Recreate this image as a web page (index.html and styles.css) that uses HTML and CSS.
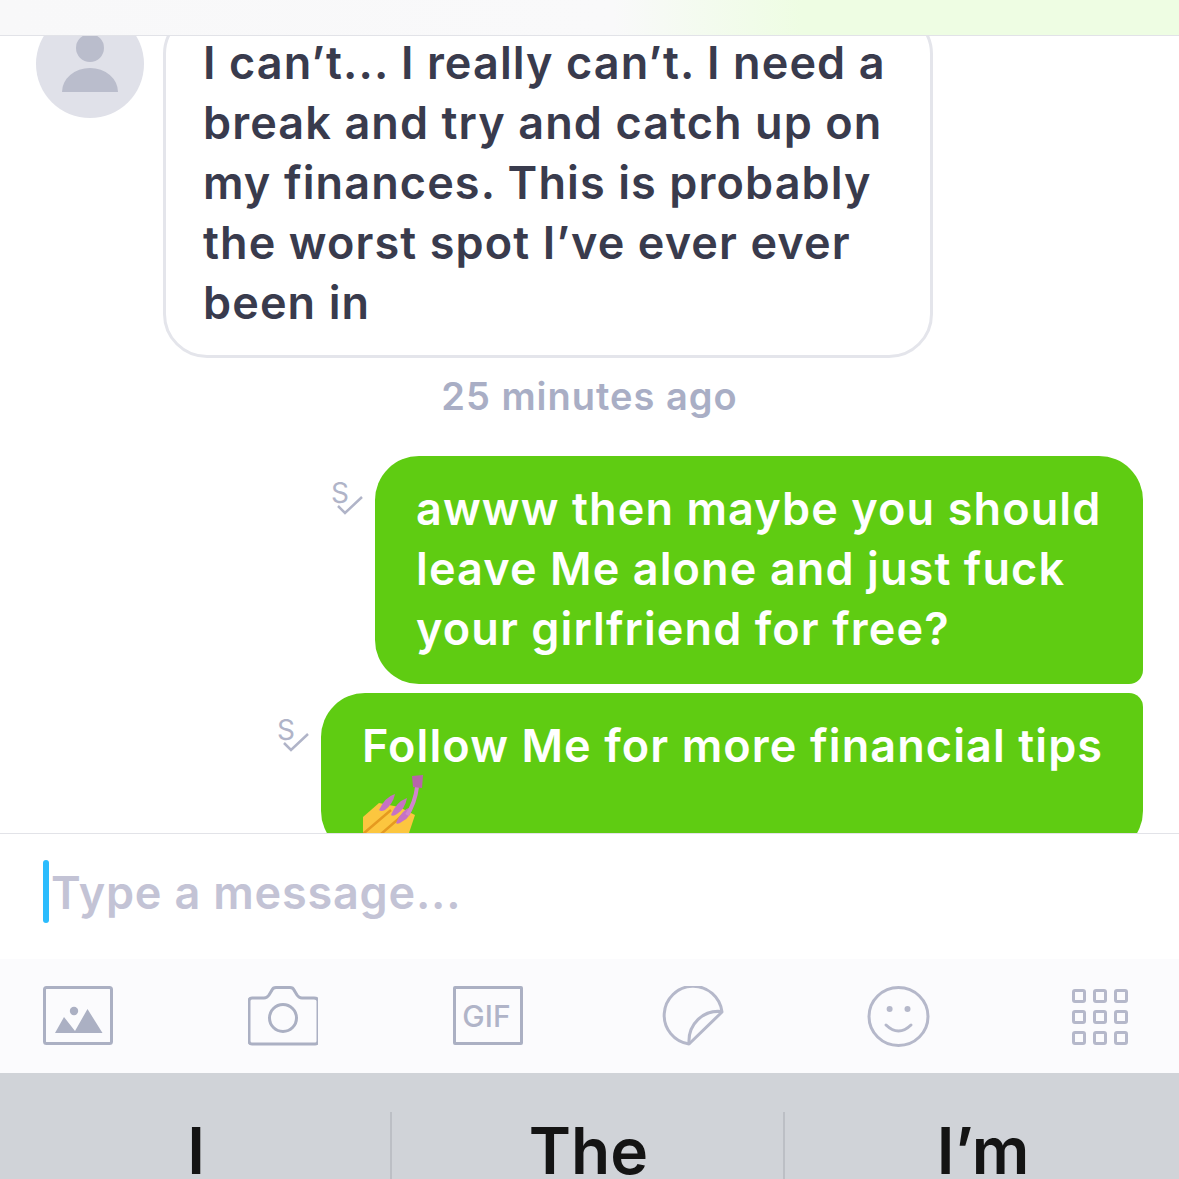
FILE: index.html
```html
<!DOCTYPE html>
<html lang="en">
<head>
<meta charset="utf-8">
<title>Chat</title>
<link rel="stylesheet" href="styles.css">
</head>
<body>
<div class="app">
  <header class="topbar"></header>
  <main class="messages">
    <div class="incoming">
      <div class="avatar">
        <svg viewBox="0 0 108 108" width="108" height="108"><circle cx="54" cy="38" r="14" fill="#babdcc"/><path d="M26 82a28 24 0 0 1 56 0z" fill="#babdcc"/></svg>
      </div>
      <div class="bubble in">I can’t... I really can’t. I need a break and try and catch up on my finances. This is probably the worst spot I’ve ever ever been in</div>
    </div>
    <div class="stamp">25 minutes ago</div>
    <div class="outgoing first">
      <div class="seen"><span class="seen-s">S</span><svg class="seen-check" viewBox="0 0 30 20" width="30" height="20"><path d="M2 10l7 7L26 1" fill="none" stroke="#b0b4c8" stroke-width="2.5"/></svg></div>
      <div class="bubble out one">awww then maybe you should leave Me alone and just fuck your girlfriend for free?</div>
    </div>
    <div class="outgoing second">
      <div class="seen"><span class="seen-s">S</span><svg class="seen-check" viewBox="0 0 30 20" width="30" height="20"><path d="M2 10l7 7L26 1" fill="none" stroke="#b0b4c8" stroke-width="2.5"/></svg></div>
      <div class="bubble out two">Follow Me for more financial tips
        <svg class="nails" viewBox="364 765 76 72" width="76" height="72">
          <path d="M364 818L380 804L400 808L416 816L410 834H364z" fill="#fcc63f"/>
          <path d="M364 835L392 811M382 835L405 815" stroke="#e59a20" stroke-width="2.500" fill="none"/>
          <path d="M380 811Q386 798 396 795Q394 805 386 811Q382 813 380 811z" fill="#c672c4"/>
          <path d="M392 816Q397 803 408 799Q406 810 398 815Q394 818 392 816z" fill="#c672c4"/>
          <path d="M397 824Q402 811 414 807Q412 818 404 822Q399 826 397 824z" fill="#c672c4"/>
          <path d="M408 816Q416 804 418 788" stroke="#d184cd" stroke-width="4" fill="none"/>
          <path d="M413 777L424 776L423 789L414 788z" fill="#b765a9"/>
        </svg>
      </div>
    </div>
  </main>
  <section class="composer">
    <span class="caret"></span><span class="placeholder">Type a message...</span>
  </section>
  <nav class="tools">
    <svg class="tool" viewBox="0 0 70 60" width="70" height="60"><rect x="1.5" y="1.5" width="67" height="56" rx="2" fill="none" stroke="#abb0c3" stroke-width="3"/><circle cx="31" cy="25" r="4.2" fill="#abb0c3"/><path d="M12 47L21 31L32 45L44.500 23L59.500 47z" fill="#abb0c3"/></svg>
    <svg class="tool" viewBox="0 0 70 60" width="70" height="60"><path d="M4 12h12q3 0 5-3l3-5q1-2.500 4-2.500h14q3 0 4 2.500l3 5q2 3 5 3h12q4 0 4 3v40q0 3-3 3H4q-3 0-3-3V15q0-3 3-3z" fill="none" stroke="#abb0c3" stroke-width="3"/><circle cx="35" cy="32" r="13.500" fill="none" stroke="#abb0c3" stroke-width="3"/></svg>
    <div class="gif">GIF</div>
    <svg class="tool" viewBox="0 0 70 60" width="70" height="60"><path d="M31 58A29 29 0 1 1 64 26z" fill="none" stroke="#b5b8ca" stroke-width="3" stroke-linejoin="round"/><path d="M63 25.500C45 24 30 38 31 57" fill="none" stroke="#b5b8ca" stroke-width="3"/></svg>
    <svg class="tool" viewBox="0 0 70 62" width="70" height="62"><ellipse cx="35.500" cy="30.500" rx="29.500" ry="29" fill="none" stroke="#b5b8ca" stroke-width="3"/><circle cx="26.600" cy="23" r="3" fill="#b5b8ca"/><circle cx="44.500" cy="23" r="3" fill="#b5b8ca"/><path d="M23 39Q35.500 51 48 39" fill="none" stroke="#b5b8ca" stroke-width="3" stroke-linecap="round"/></svg>
    <div class="grid"><i></i><i></i><i></i><i></i><i></i><i></i><i></i><i></i><i></i></div>
  </nav>
  <footer class="keyboard">
    <div class="suggestion">I</div>
    <div class="suggestion">The</div>
    <div class="suggestion">I’m</div>
  </footer>
</div>
</body>
</html>
```
FILE: styles.css
```css
* { box-sizing: border-box; }
html, body { margin: 0; padding: 0; }
body { font-family: Inter, "Liberation Sans", sans-serif; background: #fff; overflow: hidden; }
.app { width: 1179px; height: 1179px; display: flex; flex-direction: column; overflow: hidden; }
.topbar { height: 36px; flex: none; background: linear-gradient(90deg, #f8f8f9 0, #f9f9fa 52%, #eefde3 68%, #eefde3 100%); border-bottom: 1px solid #e2e3e8; position: relative; z-index: 2; }
.messages { height: 797px; flex: none; overflow: hidden; }
.incoming { display: flex; align-items: flex-start; gap: 19px; padding-left: 36px; margin-top: -26px; }
.avatar { width: 108px; height: 108px; border-radius: 50%; background: #e0e1e9; flex: none; }
.avatar svg { display: block; }
.bubble { font-size: 45px; line-height: 60px; font-weight: 600; letter-spacing: 1.1px; }
.bubble.in { width: 770px; height: 348px; border: 3px solid #e4e5eb; border-radius: 44px; padding: 20px 30px 0 37px; color: #393b4d; }
.stamp { text-align: center; color: #a9aec5; font-size: 38px; line-height: 46px; font-weight: 600; letter-spacing: 1px; margin-top: 15px; }
.outgoing { display: flex; justify-content: flex-end; padding-right: 36px; align-items: flex-start; }
.outgoing.first { margin-top: 37px; }
.outgoing.second { margin-top: 9px; }
.seen { flex: none; width: 34px; height: 40px; margin: 21px 8px 0 0; position: relative; }
.seen-s { font-size: 28px; line-height: 32px; font-weight: 400; color: #b0b4c8; display: block; margin-left: -2px; }
.seen-check { position: absolute; left: 3px; top: 19px; }
.bubble.out { background: #5fcc12; color: #fff; padding: 23px 20px 0 41px; }
.bubble.one { width: 768px; height: 228px; border-radius: 44px 44px 14px 44px; }
.bubble.two { width: 822px; height: 162px; border-radius: 44px 14px 44px 44px; }
.nails { display: block; margin: -12px 0 0 1px; }
.composer { height: 126px; flex: none; border-top: 1px solid #e2e3e8; display: flex; align-items: flex-start; padding: 26px 0 0 43px; }
.caret { width: 6px; height: 63px; border-radius: 3px; background: #2bbcfd; flex: none; }
.placeholder { font-size: 45px; line-height: 66px; font-weight: 600; letter-spacing: 0.8px; color: #c3c3d5; margin-left: 2px; }
.tools { height: 114px; flex: none; background: #fbfbfd; display: flex; gap: 135px; align-items: flex-start; padding: 27px 0 0 43px; }
.tool { display: block; flex: none; }
.gif { width: 70px; height: 59px; flex: none; border: 3px solid #abb0c3; border-radius: 2px; color: #b0b4c8; font-size: 30px; font-weight: 500; padding-right: 3px; display: flex; align-items: center; justify-content: center; }
.grid { display: grid; flex: none; grid-template-columns: repeat(3, 14px); grid-auto-rows: 14px; gap: 7px; margin: 3px 0 0 4px; }
.grid i { border: 3px solid #b5b8ca; border-radius: 3px; }
.keyboard { height: 106px; flex: none; background: #d0d3d8; display: grid; grid-template-columns: 392px 393px 394px; padding-top: 39px; overflow: hidden; }
.suggestion { text-align: center; font-size: 64px; line-height: 78px; font-weight: 600; color: #141414; border-right: 2px solid #bcbfc5; padding-left: 2px; }
.suggestion:last-child { border-right: 0; }
```
